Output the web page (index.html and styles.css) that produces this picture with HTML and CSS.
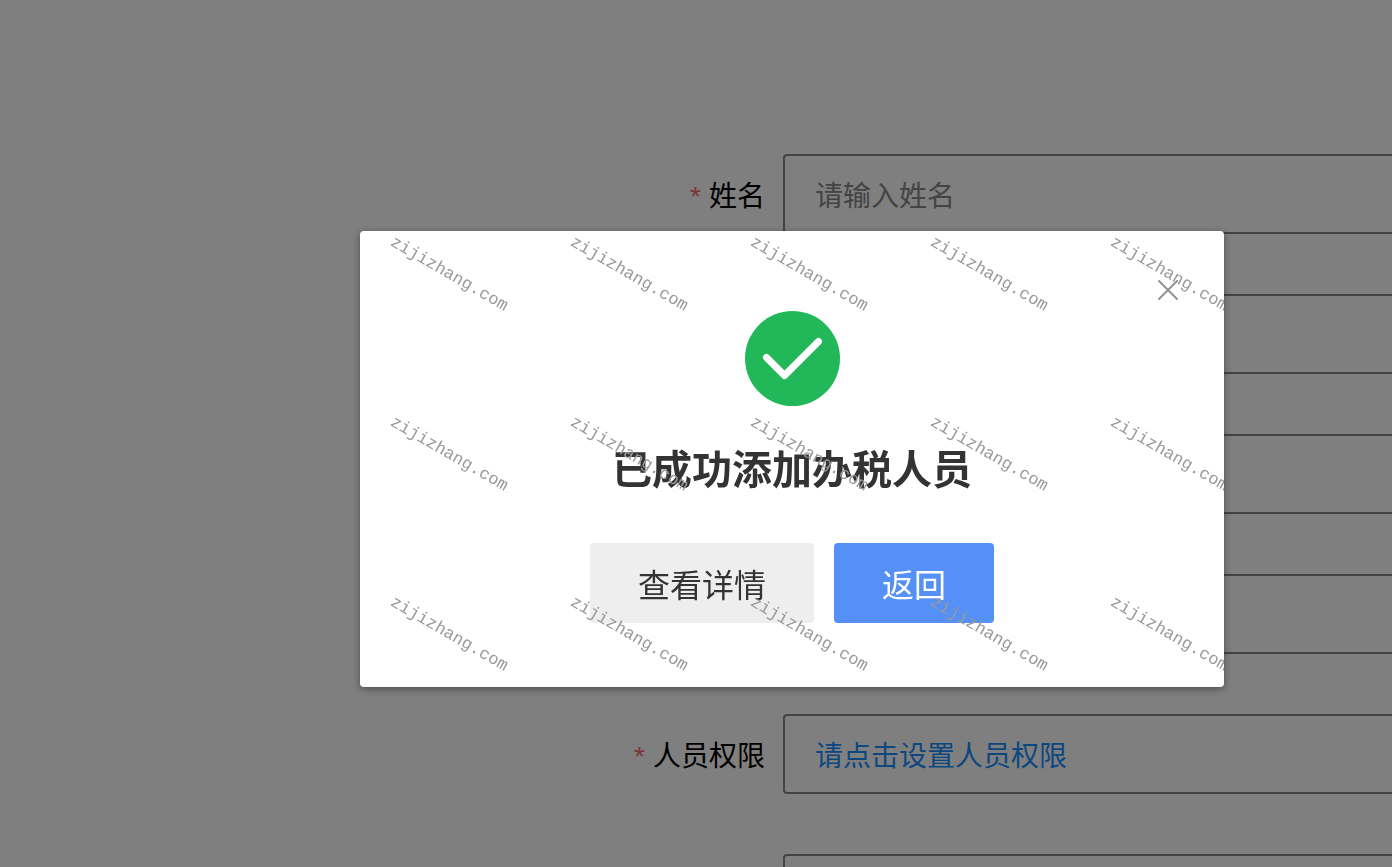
FILE: index.html
```html
<!DOCTYPE html>
<html lang="zh-CN">
<head>
<meta charset="utf-8">
<meta name="viewport" content="width=device-width, initial-scale=1">
<title>添加办税人员</title>
<link rel="stylesheet" href="styles.css">
</head>
<body>
<form class="form">
  <div class="row">
    <label class="label" for="name"><span class="required">*</span>姓名</label>
    <input class="field" id="name" type="text" placeholder="请输入姓名">
  </div>
  <div class="row"><span class="label"></span><input class="field" type="text"></div>
  <div class="row"><span class="label"></span><input class="field" type="text"></div>
  <div class="row"><span class="label"></span><input class="field" type="text"></div>
  <div class="row">
    <label class="label" for="permission"><span class="required">*</span>人员权限</label>
    <button class="field picker" id="permission" type="button">请点击设置人员权限</button>
  </div>
  <div class="row"><span class="label"></span><input class="field" type="text"></div>
</form>

<div class="backdrop">
  <section class="dialog" role="dialog" aria-modal="true" aria-labelledby="dialog-title">
    <button class="close" type="button" aria-label="关闭">
      <svg width="20" height="20" viewBox="0 0 20 20"><path d="M1 1L19 19M19 1L1 19"/></svg>
    </button>
    <svg class="success" viewBox="0 0 96 96" aria-hidden="true">
      <circle cx="48.5" cy="47.5" r="47.5"/>
      <path d="M22.5 46.5L40.500 64.500L74.500 30.500"/>
    </svg>
    <h1 class="title" id="dialog-title">已成功添加办税人员</h1>
    <div class="actions">
      <button class="button" type="button">查看详情</button>
      <button class="button primary" type="button">返回</button>
    </div>
    <div class="watermark" aria-hidden="true">
      <span>zijizhang.com</span><span>zijizhang.com</span><span>zijizhang.com</span><span>zijizhang.com</span><span>zijizhang.com</span>
      <span>zijizhang.com</span><span>zijizhang.com</span><span>zijizhang.com</span><span>zijizhang.com</span><span>zijizhang.com</span>
      <span>zijizhang.com</span><span>zijizhang.com</span><span>zijizhang.com</span><span>zijizhang.com</span><span>zijizhang.com</span>
    </div>
  </section>
</div>
</body>
</html>
```

FILE: styles.css
```css
* {
  box-sizing: border-box;
}

body {
  margin: 0;
  height: 100vh;
  overflow: hidden;
  background: #fff;
  font-family: "Liberation Sans", "Noto Sans CJK SC", sans-serif;
}

button,
input {
  margin: 0;
  font-family: inherit;
}

.form {
  display: flex;
  flex-direction: column;
  gap: 60px;
  padding-top: 154px;
}

.row {
  display: grid;
  grid-template-columns: 56.25% 1fr;
  align-items: center;
}

.label {
  padding: 6px 18px 0 0;
  color: #000;
  font-size: 28px;
  line-height: 40px;
  text-align: right;
}

.required {
  margin-right: 8px;
  color: #f56c6c;
}

.field {
  width: 100%;
  height: 80px;
  padding: 6px 30px 0;
  border: 2px solid #888;
  border-right: 0;
  border-radius: 4px 0 0 4px;
  background: #fff;
  font-size: 28px;
  text-align: left;
}

.field::placeholder {
  color: #888;
  opacity: 1;
}

.picker {
  padding-top: 0;
  color: #1890ff;
}

.backdrop {
  position: fixed;
  inset: 0;
  display: flex;
  align-items: center;
  justify-content: center;
  padding: 51px 0 0 192px;
  background: rgba(0, 0, 0, 0.5);
}

.dialog {
  position: relative;
  display: flex;
  flex-direction: column;
  align-items: center;
  width: 864px;
  max-width: 100%;
  padding: 80px 32px 64px;
  border-radius: 4px;
  background: #fff;
  box-shadow: 0 2px 8px rgba(0, 0, 0, 0.4);
}

.close {
  position: absolute;
  top: 44px;
  right: 41px;
  display: grid;
  place-items: center;
  width: 30px;
  height: 30px;
  padding: 0;
  border: 0;
  background: none;
}

.close path {
  fill: none;
  stroke: #909399;
  stroke-width: 2;
  stroke-linecap: round;
}

.success {
  width: 96px;
  height: 96px;
}

.success circle {
  fill: #22b859;
}

.success path {
  fill: none;
  stroke: #fff;
  stroke-width: 7;
  stroke-linecap: round;
  stroke-linejoin: round;
}

.title {
  margin: 33px 0 43px;
  color: #333;
  font-size: 40px;
  font-weight: 700;
  line-height: 60px;
}

.actions {
  display: flex;
  gap: 20px;
}

.button {
  height: 80px;
  padding: 0 48px;
  border: 0;
  border-radius: 4px;
  background: #eee;
  color: #333;
  font-size: 32px;
}

.primary {
  background: #5490f5;
  color: #fff;
}

.watermark {
  position: absolute;
  inset: 0;
  display: grid;
  grid-template-columns: repeat(5, 180px);
  grid-auto-rows: 180px;
  padding-left: 27px;
  overflow: hidden;
  border-radius: 4px;
  color: #999;
  font-family: "Liberation Mono", monospace;
  font-size: 17px;
  line-height: 18px;
  pointer-events: none;
}

.watermark span {
  justify-self: start;
  align-self: start;
  transform: rotate(30deg);
  transform-origin: 0 100%;
}
```
